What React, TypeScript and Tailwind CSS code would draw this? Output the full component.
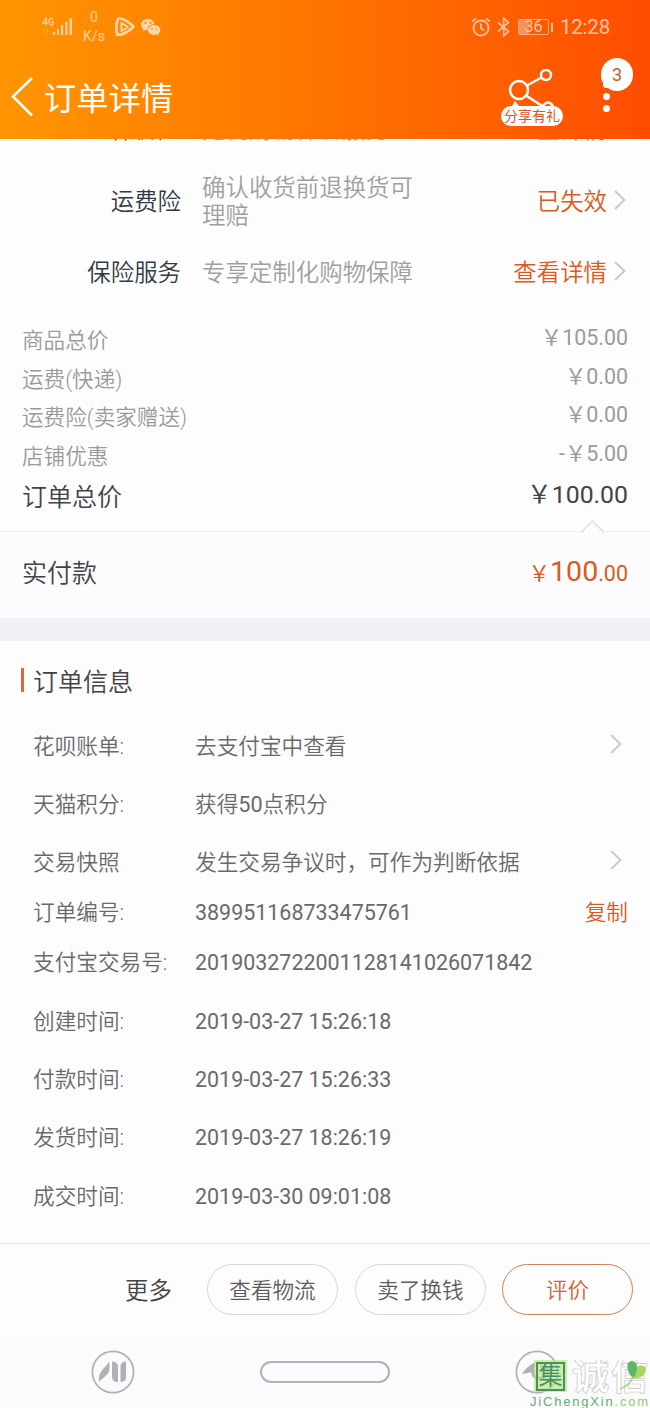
import React from "react";

const cjk = "font-['Roboto','Noto_Sans_CJK_SC',sans-serif]";

function Chevron() {
  return (
    <svg className="h-[20px] w-[12px] shrink-0" viewBox="0 0 12 20" fill="none" stroke="#c8c8cc" strokeWidth="1.8">
      <path d="M1 1l9.5 9L1 19" />
    </svg>
  );
}

function Signal() {
  return (
    <svg className="h-[20px] w-[31px]" viewBox="0 0 31 20" fill="#ffd0a0">
      <g fill="none" stroke="#ffd0a0" strokeWidth="1.3">
        <path d="M4.3 8.500V1L.7 6.200H6M11 2.500C10 .8 7 1 7 4.500S10 9 11 7.500V5H9" />
      </g>
      <path d="M2 12h1v4H2zM5 12h1v4H5z" opacity=".5" />
      <path d="M11 15h2v3h-2zM15 12h2v6h-2zM19 8h2.200v10H19zM23.300 4.500h2.200V18h-2.200zM27.500 1h2.500v17h-2.500z" />
    </svg>
  );
}

function Header() {
  return (
    <header className="h-[139px] shrink-0 bg-linear-to-r from-[#ff9500] via-[#ff7300] to-[#ff4c00] font-normal text-white">
      <div className="flex h-[54px] items-center pl-[42px] pr-[40px] text-[#ffd0a0]">
        <Signal />
        <div className="ml-[10px] flex w-[22px] flex-col items-center text-[14px] leading-[19px]">
          <span>0</span>
          <span>K/s</span>
        </div>
        <svg className="ml-[9px] h-[20px] w-[22px]" viewBox="0 0 22 20" fill="none" stroke="#ffd6ac" strokeLinejoin="round">
          <path d="M4 1.800Q9 0 19.500 9.500 12 17.500 3.500 18 .8 10 4 1.800z" strokeWidth="2.600" />
          <path d="M7.500 6l6.500 4-6.500 4z" strokeWidth="2" />
        </svg>
        <svg className="ml-[4px] h-[20px] w-[21px]" viewBox="0 0 21 20" fill="#ffd6ac">
          <path d="M8 2C3.800 2 1 4.600 1 7.700c0 1.800 1 3.300 2.400 4.300L3 14.300l2.500-1.200 2 .4c-.6-4 2.700-6.500 7-6.300C13.800 4 11.400 2 8 2z" />
          <path d="M14 8c3.800 0 6.300 2.200 6.300 5 0 1.500-.7 2.800-1.900 3.700l.4 1.900-2.200-1.100c-5 1.300-8.700-1.300-8.700-4.500C7.900 10.200 10.500 8 14 8z" />
          <g fill="#ff8500"><circle cx="5.600" cy="6" r="1" /><circle cx="10.500" cy="6" r="1" /><circle cx="12" cy="11.700" r=".8" /><circle cx="16.500" cy="11.700" r=".8" /></g>
        </svg>
        <svg className="ml-auto h-[20px] w-[20px]" viewBox="0 0 20 20" fill="none" stroke="#ffc09a" strokeWidth="1.900">
          <circle cx="10" cy="11" r="7.500" /><path d="M10 6.500V11l3 2.500M1 4.500l4-3M19 4.500l-4-3" />
        </svg>
        <svg className="ml-[6px] h-[20px] w-[13px]" viewBox="0 0 13 20" fill="none" stroke="#ffc09a" strokeWidth="1.700">
          <path d="M1 5.500l10.500 9L6.700 18.800V1.200l4.800 4.300L1 14.500" />
        </svg>
        <div className="ml-[8px] flex h-[16px] w-[31px] items-center justify-center rounded-[2px] border border-[#ffb088] bg-linear-to-r from-[#ff8f58] from-35% to-transparent to-35% text-[16px] leading-none text-[#ffc8a8]">36</div>
        <div className="ml-[2px] h-[9px] w-[2px] bg-[#ffc09a]" />
        <span className="ml-[7px] text-[20.500px] leading-none tracking-[-0.2px] text-[#ffc6a4]">12:28</span>
      </div>
      <div className="flex h-[85px] items-start">
        <svg className="ml-[11px] mt-[23px] h-[40px] w-[22px]" viewBox="0 0 22 40" fill="none" stroke="#fff" strokeWidth="2.500">
          <path d="M21 1L2 19.500 21 38.500" />
        </svg>
        <h1 className="ml-[11px] mt-[21px] text-[32.300px] font-normal leading-[48px]">订单详情</h1>
        <div className="ml-auto mt-[14px] flex w-[63px] flex-col items-center">
          <svg className="h-[38px] w-[63px]" viewBox="0 0 63 38" fill="none" stroke="#fff" strokeWidth="2.500">
            <circle cx="19" cy="22" r="9" /><circle cx="46" cy="7" r="5" /><path d="M27 17.500L41.500 9.500M26 27.500l17 11M43 38q5-7 10 0" /><path d="M12 38l3-5 4 5z" fill="#fff" stroke="none" />
          </svg>
          <div className="ml-[1px] h-[20px] w-[62px] rounded-full bg-white text-center text-[14px] leading-[20px] text-[#d1592c]">分享有礼</div>
        </div>
        <div className="ml-[38px] mr-[17px] mt-[4px] flex w-[32px] flex-col">
          <div className="flex h-[33px] w-[32px] items-center justify-center rounded-full bg-white pt-[1px] text-[18px] leading-none text-[#c65a30]">3</div>
          <div className="-mt-[10px] ml-[2px] size-[7px] rounded-full bg-white" />
          <div className="ml-[2px] mt-[5px] size-[7px] rounded-full bg-white" />
          <div className="ml-[2px] mt-[5px] size-[7px] rounded-full bg-white" />
        </div>
      </div>
    </header>
  );
}

function Service({ label, desc, action, className }: { label: string; desc: React.ReactNode; action: string; className: string }) {
  return (
    <div className={`flex shrink-0 items-center text-[23.450px] leading-[28px] ${className}`}>
      <span className="w-[181px] text-right text-[#2f3a44]">{label}</span>
      <span className="ml-[21px] text-[#9f9ea1]">{desc}</span>
      <span className="ml-auto mr-[7px] text-[#dc5a20]">{action}</span>
      <div className="mr-[24px] pb-[4px]"><Chevron /></div>
    </div>
  );
}

const prices = [
  ["商品总价", "￥105.00"],
  ["运费(快递)", "￥0.00"],
  ["运费险(卖家赠送)", "￥0.00"],
  ["店铺优惠", "-￥5.00"],
];

const info = [
  { label: "花呗账单:", value: "去支付宝中查看", h: "h-[58px]", chevron: true },
  { label: "天猫积分:", value: <>获得<span className="font-normal">50</span>点积分</>, h: "h-[58px]" },
  { label: "交易快照", value: "发生交易争议时，可作为判断依据", h: "h-[58px]", chevron: true },
  { label: "订单编号:", value: "389951168733475761", h: "h-[42px]", copy: true, digits: true },
  { label: "支付宝交易号:", value: "2019032722001128141026071842", h: "h-[58px]", digits: true },
  { label: "创建时间:", value: "2019-03-27 15:26:18", h: "h-[59px]", digits: true },
  { label: "付款时间:", value: "2019-03-27 15:26:33", h: "h-[58px]", digits: true },
  { label: "发货时间:", value: "2019-03-27 18:26:19", h: "h-[58px]", digits: true },
  { label: "成交时间:", value: "2019-03-30 09:01:08", h: "h-[59px]", digits: true },
];

export default function App() {
  return (
    <div className={`flex h-[1408px] w-[650px] flex-col overflow-hidden bg-[#fefdfe] font-[350] ${cjk}`}>
      <Header />
      <div className="flex h-[2px] shrink-0 items-end overflow-hidden text-[23.400px] leading-[28px]">
        <span className="-mb-[3px] w-[181px] text-right text-[#37414a]">保价险</span>
        <span className="-mb-[3px] ml-[21px] text-[#a2a1a4]">无忧购物保价服务</span>
        <span className="-mb-[3px] ml-auto mr-[43px] text-[#dd6833]">查详情</span>
      </div>
      <Service className="mt-[25px] h-[71px]" label="运费险" desc={<>确认收货前退换货可<br />理赔</>} action="已失效" />
      <Service className="h-[71px]" label="保险服务" desc="专享定制化购物保障" action="查看详情" />
      <section className="mt-[13px] h-[210px] shrink-0 px-[22px] pt-[1px]">
        {prices.map(([k, v]) => (
          <div key={k} className="flex h-[38.500px] items-center justify-between text-[21.600px] leading-[30px] text-[#9a9a9c]">
            <span>{k}</span>
            <span className="pb-[6px] text-[21.400px] font-normal">{v}</span>
          </div>
        ))}
        <div className="flex h-[43px] items-center justify-between text-[25px] leading-[34px] text-[#434346]">
          <span>订单总价</span>
          <span className="pb-[5px] text-[24.800px] font-normal">￥100.00</span>
        </div>
      </section>
      <section className="relative flex h-[87px] shrink-0 items-center justify-between border-t border-[#ececef] bg-[#fcfbfe] px-[22px] pb-[3px] text-[25px] text-[#434346]">
        <svg className="absolute -top-[12px] left-[580px] h-[13px] w-[25px]" viewBox="0 0 25 13">
          <path d="M1 12.500L12.500 1 24 12.500" fill="#fcfbfe" stroke="#dddde0" strokeWidth="1.300" />
        </svg>
        <span>实付款</span>
        <span className="pb-[2px] text-[21.500px] font-normal text-[#d95a1d]">￥<span className="text-[28.500px]">100</span>.00</span>
      </section>
      <div className="h-[23px] shrink-0 bg-[#f2f0f4]" />
      <section className="h-[602px] shrink-0">
        <div className="flex h-[77px] items-center pl-[21px] pt-[6px]">
          <div className="mb-[5px] h-[24px] w-[3px] bg-[#e0683c]" />
          <h2 className="ml-[9px] text-[25px] font-[350] leading-[34px] text-[#434346]">订单信息</h2>
        </div>
        {info.map((r) => (
          <div key={r.label} className={`flex items-center pl-[33px] text-[21.650px] leading-[30px] text-[#69696c] ${r.h}`}>
            <span className="w-[162px]">{r.label}</span>
            <span className={r.digits ? "whitespace-nowrap text-[21.450px] font-normal" : "whitespace-nowrap"}>{r.value}</span>
            {r.chevron && <div className="ml-auto mr-[28px] pb-[6px]"><Chevron /></div>}
            {r.copy && <span className="ml-auto mr-[22px] text-[#dc5a20]">复制</span>}
          </div>
        ))}
      </section>
      <div className="flex h-[93px] shrink-0 items-center border-t border-[#e9e9ec] pb-[1px] pr-[17px] text-[21.600px] text-[#5c5c5f]">
        <span className="ml-[125px] pt-[4px] text-[23.400px] text-[#434346]">更多</span>
        <button className="ml-auto h-[51px] w-[131px] rounded-full border border-[#d6d6d9] pt-[4px]">查看物流</button>
        <button className="ml-[17px] h-[51px] w-[131px] rounded-full border border-[#d6d6d9] pt-[4px]">卖了换钱</button>
        <button className="ml-[16px] h-[51px] w-[131px] rounded-full border border-[#cf8157] pt-[4px] text-[#d3622f]">评价</button>
      </div>
      <nav className="relative flex h-[72px] shrink-0 items-center bg-[#fbfafd] pl-[91px]">
        <svg className="size-[44px]" viewBox="0 0 44 44">
          <circle cx="22" cy="22" r="20.600" fill="none" stroke="#b1b0b4" strokeWidth="1.700" />
          <g fill="#b1b0b4"><path d="M18.500 11.500V20q-1 4-4.500 6.500T8 32v-5q0-3 2.500-6z" /><path d="M21 11.500q6 0 6 5.500v15q-6 0-6-5.500zM35 11.500V27q0 5-5.500 5V17q0-5.500 5.500-5.500z" /></g>
        </svg>
        <div className="ml-[125px] h-[22px] w-[130px] rounded-full border-2 border-[#b1b0b4]" />
        <svg className="ml-[125px] size-[44px]" viewBox="0 0 44 44">
          <circle cx="22" cy="22" r="20.600" fill="none" stroke="#b1b0b4" strokeWidth="1.700" />
          <path d="M7 24Q10 18 20 12v5l-3 5q-3 1-10 2z" fill="#b1b0b4" />
          <path d="M19 19c-3 5 0 9 5 9 5 0 9-2 9-6s-4-6-8-6" fill="none" stroke="#b1b0b4" strokeWidth="3" />
        </svg>
        <div className="absolute left-[530px] top-[24px] w-[120px]">
          <div className="flex items-start">
            <div className="ml-[4px] flex h-[32px] w-[33px] items-center justify-center bg-[#b6e878]/70">
              <div className="flex h-[29px] w-[29px] items-center justify-center border-2 border-[#45906b] text-[24px] font-normal leading-none text-[#45906b]">集</div>
            </div>
            <svg className="h-[34px] w-[83px]" viewBox="0 0 83 34">
              <text x="5" y="30" fontSize="37" fontWeight="700" textLength="76" fontFamily="Noto Sans CJK SC" fill="#fff" stroke="#c6c6c9" strokeWidth=".7">诚信</text>
              <path d="M62 3C64 0 69 1 70 7c4-3 9-1 9 3-1 6-7 9-13 8-4-4-6-11-4-15z" fill="#a6d85c" />
              <path d="M66 18C60 13 59 4 62 2c5-2 8 1 8 5 0 4-1 8-4 11z" fill="#5cb669" />
              <path d="M66 17q-3 8-13 12" fill="none" stroke="#a9d47b" strokeWidth="1.500" />
            </svg>
          </div>
          <div className="whitespace-nowrap font-['Liberation_Sans'] text-[13px] font-normal leading-[15px] tracking-[1.800px] text-[#63ad73]">JiChengXin<span className="text-[#9bca66]">.com</span></div>
        </div>
      </nav>
    </div>
  );
}
